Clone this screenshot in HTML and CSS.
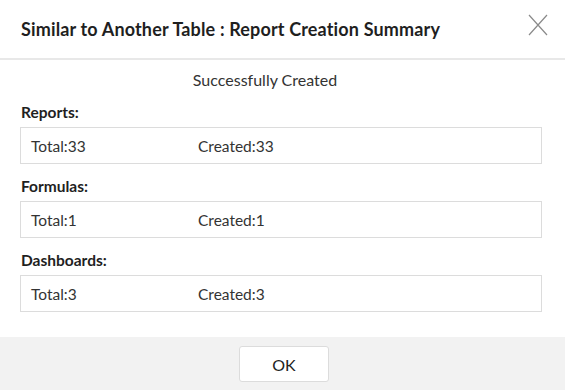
FILE: index.html
```html
<!DOCTYPE html>
<html lang="en">
<head>
  <meta charset="UTF-8" />
  <meta name="viewport" content="width=device-width, initial-scale=1" />
  <title>Report Creation Summary</title>
  <link rel="stylesheet" href="styles.css">
</head>
<body>
  <div class="dialog">
    <header class="dialog-header">
      <h1>Similar to Another Table : Report Creation Summary</h1>
      <button class="close" aria-label="Close">
        <svg width="20" height="22" viewBox="0 0 20 22">
          <path d="M1 1 L19 21 M19 1 L1 21" stroke="#8a8a8a" stroke-width="1.2" fill="none" />
        </svg>
      </button>
    </header>

    <section class="dialog-body">
      <p class="status">Successfully Created</p>

      <h2>Reports:</h2>
      <div class="summary">
        <span class="total">Total:33</span>
        <span>Created:33</span>
      </div>

      <h2>Formulas:</h2>
      <div class="summary">
        <span class="total">Total:1</span>
        <span>Created:1</span>
      </div>

      <h2>Dashboards:</h2>
      <div class="summary">
        <span class="total">Total:3</span>
        <span>Created:3</span>
      </div>
    </section>

    <footer class="dialog-footer">
      <button class="ok">OK</button>
    </footer>
  </div>
</body>
</html>
```

FILE: styles.css
```css
body {
  margin: 0;
  font-family: Lato, "Open Sans", sans-serif;
  color: #333;
  background-color: #fff;
}
.dialog {
  width: 565px;
  height: 390px;
  display: flex;
  flex-direction: column;
}
.dialog-header {
  height: 58px;
  display: flex;
  align-items: center;
  justify-content: space-between;
  padding: 0 17px 0 21px;
  border-bottom: 2px solid #e8e8e8;
}
.dialog-header h1 {
  margin: 0;
  font-size: 18px;
  letter-spacing: 0.15px;
  font-weight: bold;
  color: #1f1f1f;
}
.close {
  background: none;
  border: none;
  padding: 0;
  width: 20px;
  height: 22px;
  margin-top: -8px;
  cursor: pointer;
}
.close svg {
  display: block;
}
.dialog-body {
  flex: 1;
  padding: 10px 23px 25px 20px;
}
.status {
  margin: 0;
  text-align: center;
  font-size: 16px;
  line-height: 20px;
  padding-right: 32px;
}
.dialog-body h2 {
  margin: 13px 0 6px 1px;
  font-size: 15.5px;
  line-height: 18px;
  font-weight: bold;
  color: #1f1f1f;
}
.summary {
  display: flex;
  align-items: center;
  height: 35px;
  padding-left: 10px;
  border: 1px solid #dcdcdc;
  font-size: 15.5px;
}
.summary .total {
  width: 167px;
}
.dialog-footer {
  height: 53px;
  background-color: #f2f2f2;
  display: flex;
  justify-content: center;
  padding-top: 9px;
  box-sizing: border-box;
}
.ok {
  width: 90px;
  height: 36px;
  margin-left: 3px;
  background-color: #fff;
  border: 1px solid #dcdcdc;
  border-radius: 3px;
  font-family: inherit;
  font-size: 16px;
  color: #222;
  cursor: pointer;
}
```
